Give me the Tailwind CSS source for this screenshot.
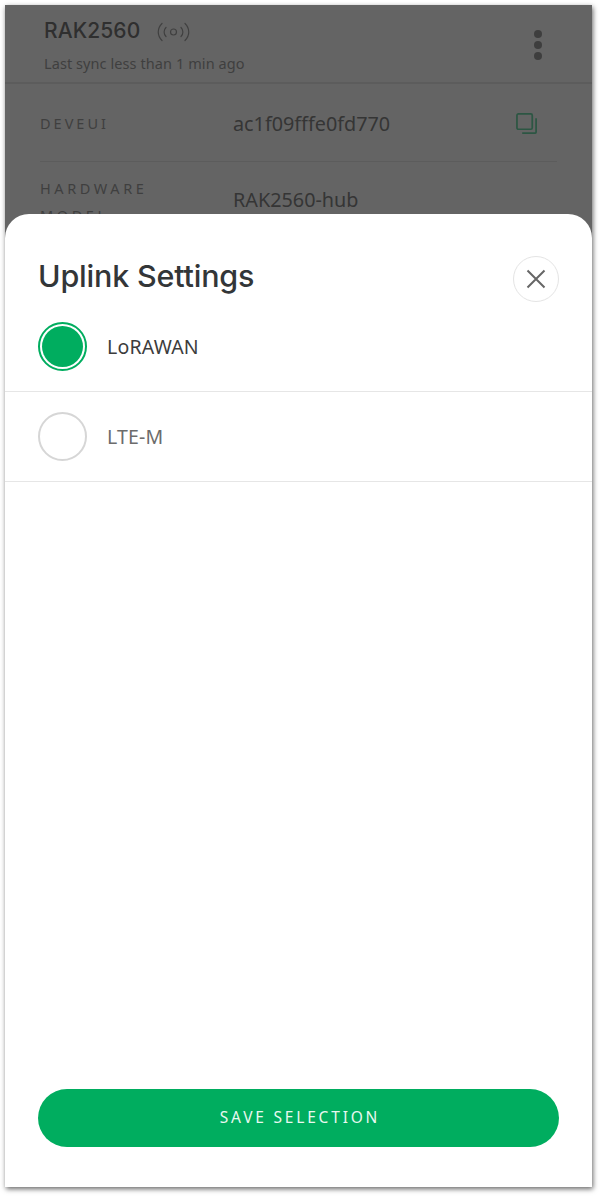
<!DOCTYPE html>
<html>
<head>
<meta charset="utf-8">
<script src="https://cdn.jsdelivr.net/npm/@tailwindcss/browser@4"></script>
</head>
<body class="bg-white font-['Noto_Sans',sans-serif]">
<div class="w-[601px] h-[1197px] pl-[5px] pt-[5px]">
  <div class="relative w-[587px] h-[1182px] overflow-hidden bg-[#646464] shadow-[1px_2px_5px_rgba(0,0,0,0.6)]">
    <header class="h-[79px] border-b-2 border-[#5c5c5c] pl-[39px] pr-[50px] flex justify-between items-center">
      <div class="pt-[2px]">
        <div class="flex items-center h-[28px]">
          <span class="font-['Inter',sans-serif] font-medium text-[21px] text-[#2f2f2f] tracking-[0.1px]">RAK2560</span>
          <svg class="ml-[16px] mt-[3px]" width="35" height="20" viewBox="0 0 35 20" fill="none" stroke="#404040" stroke-width="1.2" stroke-linecap="round">
            <path d="M6 1.5C1 6.5 1 13.5 6 18.500"/>
            <path d="M10 5.500C7.500 8 7.500 12 10 14.500"/>
            <circle cx="17.500" cy="10" r="3"/>
            <path d="M25 5.500C27.500 8 27.500 12 25 14.500"/>
            <path d="M29 1.500C34 6.500 34 13.500 29 18.500"/>
          </svg>
        </div>
        <div class="mt-[8px] text-[14.500px] leading-[20px] text-[#3f3f3f] tracking-[0.08px]">Last sync less than 1 min ago</div>
      </div>
      <div class="flex flex-col gap-[3px] mt-[3px]">
        <span class="w-[8px] h-[8px] rounded-full bg-[#3e3e3e]"></span>
        <span class="w-[8px] h-[8px] rounded-full bg-[#3e3e3e]"></span>
        <span class="w-[8px] h-[8px] rounded-full bg-[#3e3e3e]"></span>
      </div>
    </header>
    <div class="mx-[35px] h-[78px] border-b border-[#5c5c5c] flex items-center">
      <span class="w-[194px] mt-[3px] text-[14.500px] tracking-[3px] text-[#3f3f3f]">DEVEUI</span>
      <span class="text-[19.800px] text-[#353535] mt-[2px] ml-[-1px]">ac1f09fffe0fd770</span>
      <svg class="ml-auto mr-[19px] mt-[2px]" width="22" height="22" viewBox="0 0 23 23" fill="none" stroke="#2c5643" stroke-width="1.800">
        <rect x="1" y="1" width="16" height="16" rx="1.500"/>
        <path d="M21 5.500V20a1 1 0 0 1-1 1H6.500"/>
      </svg>
    </div>
    <div class="mx-[35px] flex pt-[13px]">
      <span class="w-[194px] pr-[30px] text-[14.500px] leading-[27px] tracking-[3.600px] text-[#3f3f3f]">HARDWARE MODEL</span>
      <span class="text-[19.800px] text-[#353535] mt-[10px] ml-[-1px]">RAK2560-hub</span>
    </div>
    <section class="absolute inset-x-0 top-[209px] bottom-0 bg-white rounded-t-[24px] flex flex-col">
      <div class="h-[88px] pl-[33px] pr-[33px] pt-[42px] flex justify-between items-start">
        <h2 class="font-['Inter',sans-serif] font-medium text-[30.500px] leading-[40px] tracking-[-0.2px] text-[#333638]">Uplink Settings</h2>
        <button class="w-[46px] h-[46px] rounded-full border border-[#e4e4e4] flex items-center justify-center">
          <svg width="20" height="20" viewBox="0 0 20 20" fill="none" stroke="#666666" stroke-width="2"><path d="M1.500 1.500L18.500 18.500M18.500 1.500L1.500 18.500"/></svg>
        </button>
      </div>
      <div class="h-[90px] border-b border-[#e6e6e6] pl-[33px] flex items-center gap-[20px]">
        <span class="w-[49px] h-[49px] rounded-full border-2 border-[#00ad5f] p-[2px]"><span class="block w-full h-full rounded-full bg-[#00ad5f]"></span></span>
        <span class="text-[19.500px] tracking-[0.2px] text-[#3c3c3c]">LoRAWAN</span>
      </div>
      <div class="h-[90px] border-b border-[#e6e6e6] pl-[33px] flex items-center gap-[20px]">
        <span class="w-[49px] h-[49px] rounded-full border-2 border-[#d6d6d6]"></span>
        <span class="text-[19.500px] tracking-[0.2px] text-[#6c6c6c]">LTE-M</span>
      </div>
      <div class="mt-auto px-[33px] pb-[40px]">
        <button class="w-full h-[58px] rounded-full bg-[#00ad5f] text-[#e8f8f0] text-[15.500px] tracking-[2.800px] pl-[3px]">SAVE SELECTION</button>
      </div>
    </section>
  </div>
</div>
</body>
</html>
